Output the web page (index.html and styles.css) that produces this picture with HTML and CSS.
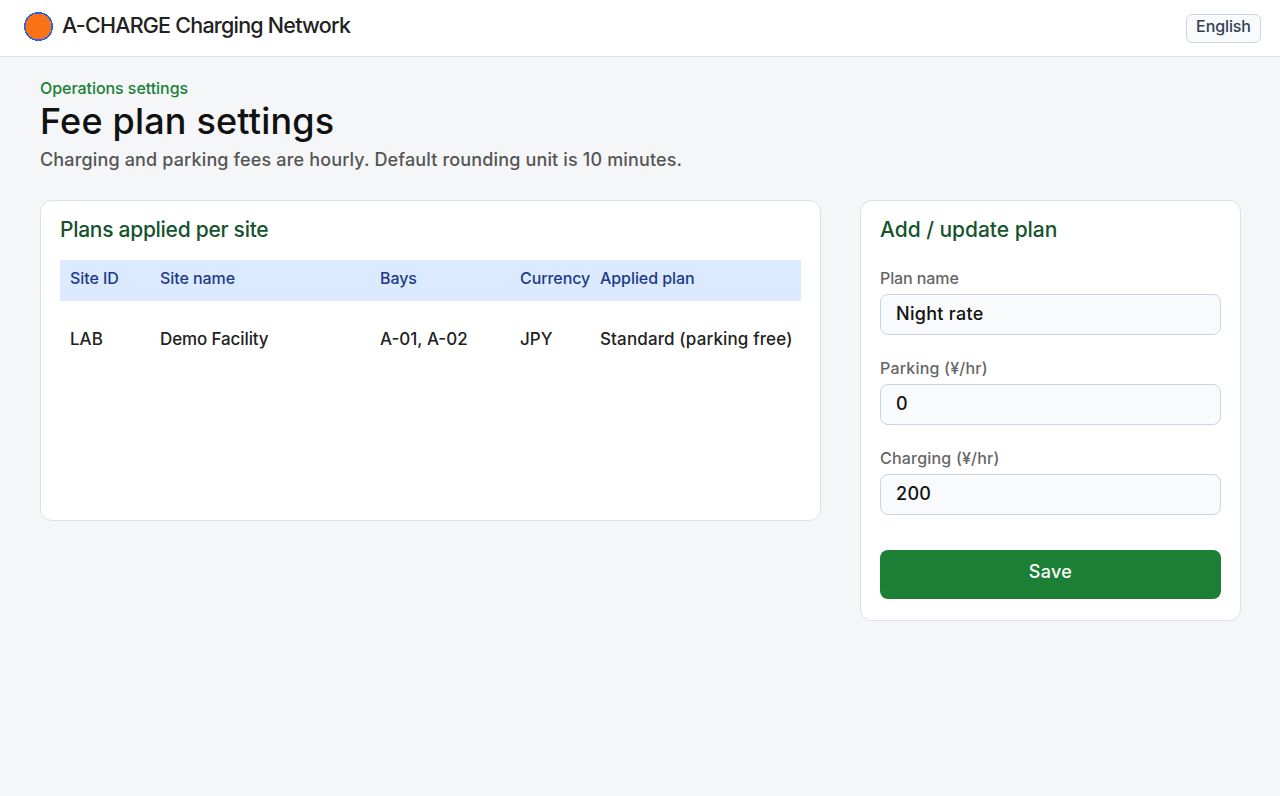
FILE: index.html
```html
<!DOCTYPE html>
<html lang="en">
<head>
    <meta charset="UTF-8">
    <meta name="viewport" content="width=device-width, initial-scale=1.0">
    <title>Fee plan settings</title>
    <link rel="stylesheet" href="styles.css">
</head>
<body>

<header class="topbar">
    <div class="brand">
        <svg class="logo" width="29" height="29" viewBox="0 0 29 29" shape-rendering="crispEdges">
            <circle cx="14.5" cy="14.5" r="14.5" fill="#2563eb"/>
            <circle cx="14.5" cy="14.5" r="13" fill="#f97316"/>
        </svg>
        <span class="brand-name">A-CHARGE Charging Network</span>
    </div>
    <button class="lang-btn">English</button>
</header>

<main class="page">
    <p class="eyebrow">Operations settings</p>
    <h1>Fee plan settings</h1>
    <p class="lead">Charging and parking fees are hourly. Default rounding unit is 10 minutes.</p>

    <div class="columns">
        <section class="card">
            <h2>Plans applied per site</h2>
            <table class="plans">
                <colgroup>
                    <col class="col-id">
                    <col class="col-name">
                    <col class="col-bays">
                    <col class="col-currency">
                    <col>
                </colgroup>
                <thead>
                    <tr>
                        <th>Site ID</th>
                        <th>Site name</th>
                        <th>Bays</th>
                        <th>Currency</th>
                        <th>Applied plan</th>
                    </tr>
                </thead>
                <tbody>
                    <tr>
                        <td>LAB</td>
                        <td class="site-name">Demo Facility</td>
                        <td>A-01, A-02</td>
                        <td>JPY</td>
                        <td class="plan">Standard (parking free)</td>
                    </tr>
                </tbody>
            </table>
        </section>

        <form class="card card-form">
            <h2>Add / update plan</h2>
            <div class="field">
                <label for="planName">Plan name</label>
                <input id="planName" type="text" value="Night rate">
            </div>
            <div class="field">
                <label class="rate" for="parking">Parking (¥/hr)</label>
                <input id="parking" type="text" value="0">
            </div>
            <div class="field">
                <label class="rate" for="charging">Charging (¥/hr)</label>
                <input id="charging" type="text" value="200">
            </div>
            <button class="save-btn" type="button">Save</button>
        </form>
    </div>
</main>

</body>
</html>
```
FILE: styles.css
```css
* {
    box-sizing: border-box;
}

body {
    margin: 0;
    font-family: Inter, "Liberation Sans", sans-serif;
    font-weight: 500;
    color: #222;
    background: #f4f6f8;
}

h1, h2, p {
    margin: 0;
    font-weight: 500;
}

input, button {
    font-family: inherit;
    font-weight: 500;
}

.topbar {
    display: flex;
    justify-content: space-between;
    align-items: flex-start;
    height: 57px;
    padding: 12px 19px 0 24px;
    background: #fff;
    border-bottom: 1px solid #dce0e6;
}

.brand {
    display: flex;
    gap: 9px;
}

.brand-name {
    font-size: 21.5px;
    line-height: 26px;
    letter-spacing: -0.77px;
}

.lang-btn {
    width: 75px;
    height: 29px;
    margin-top: 2px;
    padding: 0 0 5px;
    font-size: 16px;
    line-height: 22px;
    letter-spacing: -0.1px;
    color: #334155;
    background: #f8fafc;
    border: 1px solid #cbd5e1;
    border-radius: 6px;
}

.page {
    padding: 20px 39px 0 40px;
}

.eyebrow {
    font-size: 16px;
    line-height: 22px;
    letter-spacing: -0.05px;
    color: #1b8036;
}

h1 {
    font-size: 36px;
    line-height: 44px;
    letter-spacing: 0.18px;
    color: #111;
}

.lead {
    font-size: 18px;
    line-height: 33px;
    letter-spacing: 0.15px;
    color: #555;
}

.columns {
    display: grid;
    grid-template-columns: 781px 381px;
    gap: 39px;
    align-items: start;
    margin-top: 24px;
}

.card {
    min-height: 321px;
    padding: 13px 19px 0;
    background: #fff;
    border: 1px solid #dce0e6;
    border-radius: 12px;
}

.card-form {
    min-height: 421px;
}

h2 {
    margin-bottom: 14px;
    font-size: 21px;
    line-height: 32px;
    letter-spacing: -0.28px;
    color: #14532d;
}

.card-form h2 {
    letter-spacing: -0.03px;
}

.plans {
    width: 100%;
    table-layout: fixed;
    border-collapse: collapse;
}

.col-id { width: 90px; }
.col-name { width: 220px; }
.col-bays { width: 140px; }
.col-currency { width: 80px; }

th, td {
    padding: 0 0 0 10px;
    text-align: left;
    font-weight: 500;
    white-space: nowrap;
}

th {
    padding-bottom: 5px;
    font-size: 16px;
    line-height: 36px;
    letter-spacing: -0.07px;
    color: #1e3a8a;
    background: #dbeafe;
}

td {
    padding-top: 28px;
    font-size: 17px;
    line-height: 20px;
}

.site-name {
    letter-spacing: -0.12px;
}

.plan {
    letter-spacing: 0.13px;
}

.field {
    padding-top: 7px;
    margin-bottom: 15px;
}

.field label {
    display: block;
    margin-bottom: 5px;
    font-size: 16px;
    line-height: 22px;
    letter-spacing: -0.1px;
    color: #666;
}

.field .rate {
    letter-spacing: 0.2px;
}

.field input {
    display: block;
    width: 100%;
    height: 41px;
    padding: 0 15px 2px;
    font-size: 18px;
    letter-spacing: 0.3px;
    color: #111;
    background: #f8fafc;
    border: 1px solid #cbd5e1;
    border-radius: 8px;
}

.save-btn {
    display: block;
    width: 100%;
    height: 49px;
    margin-top: 35px;
    padding: 0 0 6px;
    font-size: 18px;
    letter-spacing: 0.3px;
    color: #fff;
    background: #1b8036;
    border: none;
    border-radius: 8px;
}
```
